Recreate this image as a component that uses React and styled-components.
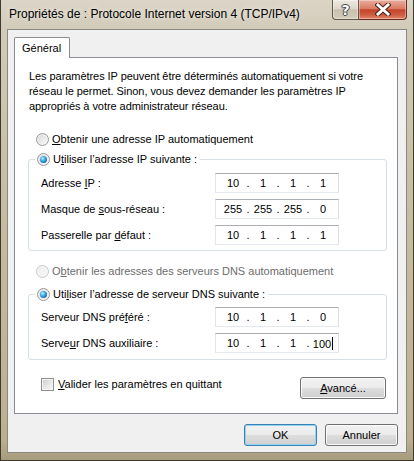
import React from 'react';
import styled, { createGlobalStyle } from 'styled-components';

const Global = createGlobalStyle`
  html, body { margin: 0; padding: 0; background: #c9c0a8; }
  body {
    width: 414px; height: 461px; overflow: hidden;
    font-family: "Liberation Sans", Arial, sans-serif;
    font-size: 11px; color: #000;
  }
  * { box-sizing: border-box; }
`;

const Window = styled.div`
  width: 414px;
  height: 461px;
  display: flex;
  flex-direction: column;
  padding: 0 6px 7px 6px;
  border: 1px solid #3e3a2f;
  border-top: none;
  background:
    linear-gradient(to bottom, #dbd5c7 0px, #d2cbb9 28px, #c8bea3 180px, #bdb092 440px, #a69a7c 461px);
`;

const TitleBar = styled.div`
  height: 29px;
  display: flex;
  justify-content: space-between;
  align-items: flex-start;
  flex: none;
`;

const Title = styled.div`
  margin: 7px 0 0 2px;
  font-size: 12px;
  line-height: 15px;
  white-space: nowrap;
  text-shadow: 0 0 6px rgba(255, 255, 255, 0.9);
`;

const Caption = styled.div`
  display: flex;
  height: 20px;
`;

const CaptionButton = styled.div`
  width: ${p => p.$w}px;
  height: 20px;
  display: flex;
  align-items: center;
  justify-content: center;
  border: 1px solid ${p => (p.$close ? '#6a2c20' : '#5e5a4b')};
  border-top: none;
  border-left: ${p => (p.$close ? 'none' : '1px solid #5e5a4b')};
  border-radius: ${p => (p.$close ? '0 0 4px 0' : '0 0 0 4px')};
  background: ${p =>
    p.$close
      ? 'linear-gradient(to bottom, #e9ad9d 0%, #db7b63 45%, #c5432a 52%, #cf5f45 80%, #e28a6b 100%)'
      : 'linear-gradient(to bottom, #ece9e1 0%, #ddd8cb 45%, #c8c1ad 52%, #d3cdbb 100%)'};
  box-shadow: inset 0 0 0 1px rgba(255, 255, 255, 0.35);
`;

const Help = styled.span`
  font-family: "DejaVu Sans", sans-serif;
  font-weight: bold;
  font-size: 14px;
  line-height: 14px;
  color: #fff;
  text-shadow: 0 0 1px #333, 0 0 1px #333, 1px 0 0 #555, -1px 0 0 #555, 0 1px 0 #555, 0 -1px 0 #555;
`;

const Client = styled.div`
  flex: 1;
  display: flex;
  flex-direction: column;
  border: 1px solid #8b897f;
  background: #f0f0f0;
  padding: 7px 7px 6px 6px;
`;

const TabStrip = styled.div`
  height: 20px;
  display: flex;
  align-items: flex-end;
  flex: none;
`;

const Tab = styled.div`
  height: 21px;
  margin-bottom: -1px;
  padding: 0 8px 0 7px;
  display: flex;
  align-items: center;
  background: #fff;
  border: 1px solid #898c95;
  border-bottom: none;
  border-radius: 2px 2px 0 0;
  position: relative;
  z-index: 1;
`;

const Panel = styled.div`
  width: 384px;
  height: 357px;
  flex: none;
  background: #fff;
  border: 1px solid #898c95;
  padding: 11px 10px 0 13px;
  display: flex;
  flex-direction: column;
`;

const Paragraph = styled.p`
  margin: 0;
  line-height: 15px;
  white-space: nowrap;
  padding-left: 1px;
  letter-spacing: -0.06px;
`;

const RadioRow = styled.label`
  display: flex;
  align-items: center;
  gap: 3px;
  height: 16px;
  margin-top: ${p => p.$mt || 0}px;
  padding-left: ${p => p.$pl ?? 8}px;
  color: ${p => (p.$disabled ? '#6d6d6d' : '#000')};
  white-space: nowrap;
`;

const Radio = styled.span`
  position: relative;
  width: 13px;
  height: 13px;
  flex: none;
  border-radius: 50%;
  border: 1px solid ${p => (p.$disabled ? '#c9c9c9' : '#989898')};
  background: ${p =>
    p.$disabled
      ? 'linear-gradient(135deg, #ececec, #fafafa)'
      : 'linear-gradient(135deg, #d4d4d4 0%, #ececec 55%, #fdfdfd 100%)'};
  box-shadow: inset 0 0 0 1px ${p => (p.$disabled ? '#f6f6f6' : '#f2f2f2')};
  &::after {
    content: '';
    display: ${p => (p.$checked ? 'block' : 'none')};
    position: absolute;
    left: 2px;
    top: 2px;
    width: 7px;
    height: 7px;
    border-radius: 50%;
    background: radial-gradient(circle at 38% 35%, #c8f0ff 0%, #45b0ec 35%, #1468b4 75%, #0b3f78 100%);
  }
`;

const Group = styled.fieldset`
  margin: ${p => p.$mt}px 0 0 0;
  padding: ${p => p.$pt}px 0 ${p => p.$pb}px 12px;
  border: 1px solid #d5dfe5;
  border-radius: 3px;
  min-width: 0;
  display: grid;
  grid-template-columns: 174px 124px;
  row-gap: 6px;
  align-items: center;
`;

const Legend = styled.legend`
  margin-left: -6px;
  padding: 0 3px 0 2px;
  height: 16px;
`;

const LegendInner = styled.span`
  display: flex;
  align-items: center;
  gap: 3px;
  height: 16px;
  white-space: nowrap;
`;

const FieldLabel = styled.span`
  white-space: nowrap;
`;

const IpField = styled.div`
  width: 124px;
  height: 20px;
  display: flex;
  align-items: center;
  padding-left: 5px;
  background: #fff;
  border: 1px solid;
  border-color: #abadb3 #dbdfe6 #e3e9ef #e2e3ea;
`;

const Seg = styled.span`
  width: 24px;
  text-align: center;
  position: relative;
`;

const Dot = styled.span`
  width: 6px;
  text-align: center;
`;

const Caret = styled.span`
  display: inline-block;
  width: 1px;
  height: 13px;
  background: #000;
  vertical-align: -2px;
  margin-left: 1px;
`;

const BottomRow = styled.div`
  display: flex;
  justify-content: space-between;
  align-items: flex-start;
  margin-top: 16px;
  padding-right: 1px;
`;

const CheckLabel = styled.label`
  display: flex;
  align-items: center;
  gap: 4px;
  height: 16px;
  padding-left: 13px;
  white-space: nowrap;
`;

const Check = styled.span`
  width: 13px;
  height: 13px;
  flex: none;
  border: 1px solid #8f8f8f;
  background: linear-gradient(135deg, #cbcbcb 0%, #e6e6e6 50%, #f8f8f8 100%);
  box-shadow: inset 0 0 0 1px #f4f4f4;
`;

const Button = styled.button`
  width: ${p => p.$w}px;
  height: 22px;
  margin-top: ${p => p.$mt || 0}px;
  padding: 0;
  font-family: "Liberation Sans", Arial, sans-serif;
  font-size: 11px;
  color: #000;
  border-radius: 3px;
  border: 1px solid ${p => (p.$default ? '#3c7fb1' : '#707070')};
  background: linear-gradient(to bottom, #f2f2f2 0%, #ebebeb 48%, #dddddd 52%, #cfcfcf 100%);
  box-shadow: inset 0 0 0 1px ${p => (p.$default ? '#8fd3f5' : '#fbfbfb')};
`;

const Footer = styled.div`
  display: flex;
  justify-content: flex-end;
  gap: 8px;
  margin-top: 10px;
  padding-right: 1px;
`;

const U = styled.span`
  text-decoration: underline;
  text-underline-offset: 1px;
`;

function Ip({ parts, caret }) {
  return (
    <IpField>
      {parts.map((p, i) => (
        <React.Fragment key={i}>
          {i > 0 && <Dot>.</Dot>}
          <Seg>
            {p}
            {caret && i === parts.length - 1 && <Caret />}
          </Seg>
        </React.Fragment>
      ))}
    </IpField>
  );
}

export default function App() {
  return (
    <>
      <Global />
      <Window>
        <TitleBar>
          <Title>Propriétés de : Protocole Internet version 4 (TCP/IPv4)</Title>
          <Caption>
            <CaptionButton $w={27}>
              <Help>?</Help>
            </CaptionButton>
            <CaptionButton $w={48} $close>
              <svg width="16" height="13" viewBox="0 0 16 13">
                <path d="M3 2 L13 11 M13 2 L3 11" stroke="#4a2018" strokeWidth="5" strokeLinecap="square" />
                <path d="M3 2 L13 11 M13 2 L3 11" stroke="#ffffff" strokeWidth="3" strokeLinecap="square" />
              </svg>
            </CaptionButton>
          </Caption>
        </TitleBar>
        <Client>
          <TabStrip>
            <Tab>Général</Tab>
          </TabStrip>
          <Panel>
            <Paragraph>
              Les paramètres IP peuvent être déterminés automatiquement si votre
              <br />
              réseau le permet. Sinon, vous devez demander les paramètres IP
              <br />
              appropriés à votre administrateur réseau.
            </Paragraph>
            <RadioRow $mt={17}>
              <Radio />
              <span><U>O</U>btenir une adresse IP automatiquement</span>
            </RadioRow>
            <Group $mt={4} $pt={6} $pb={5}>
              <Legend>
                <LegendInner>
                  <Radio $checked />
                  <span>U<U>t</U>iliser l’adresse IP suivante :</span>
                </LegendInner>
              </Legend>
              <FieldLabel>Adresse <U>I</U>P :</FieldLabel>
              <Ip parts={['10', '1', '1', '1']} />
              <FieldLabel>Masque de <U>s</U>ous-réseau :</FieldLabel>
              <Ip parts={['255', '255', '255', '0']} />
              <FieldLabel>Passerelle par <U>d</U>éfaut :</FieldLabel>
              <Ip parts={['10', '1', '1', '1']} />
            </Group>
            <RadioRow $mt={12} $disabled>
              <Radio $disabled />
              <span>O<U>b</U>tenir les adresses des serveurs DNS automatiquement</span>
            </RadioRow>
            <Group $mt={7} $pt={5} $pb={6}>
              <Legend>
                <LegendInner>
                  <Radio $checked />
                  <span>Uti<U>l</U>iser l’adresse de serveur DNS suivante :</span>
                </LegendInner>
              </Legend>
              <FieldLabel>Serveur DNS pré<U>f</U>éré :</FieldLabel>
              <Ip parts={['10', '1', '1', '0']} />
              <FieldLabel>Serve<U>u</U>r DNS auxiliaire :</FieldLabel>
              <Ip parts={['10', '1', '1', '100']} caret />
            </Group>
            <BottomRow>
              <CheckLabel>
                <Check />
                <span><U>V</U>alider les paramètres en quittant</span>
              </CheckLabel>
              <Button $w={86} $mt={1}><U>A</U>vancé...</Button>
            </BottomRow>
          </Panel>
          <Footer>
            <Button $w={73} $default>OK</Button>
            <Button $w={73}>Annuler</Button>
          </Footer>
        </Client>
      </Window>
    </>
  );
}
